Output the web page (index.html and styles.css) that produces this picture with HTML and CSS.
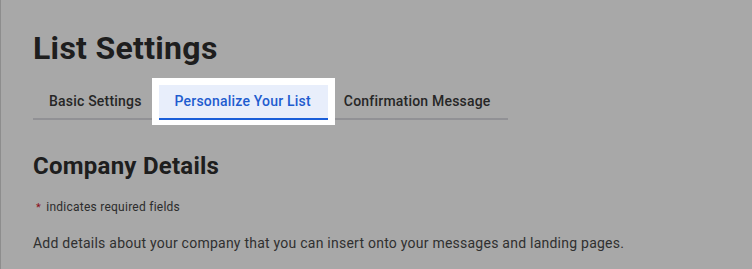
FILE: index.html
```html
<!DOCTYPE html>
<html lang="en">
<head>
<meta charset="utf-8">
<title>List Settings</title>
<link rel="stylesheet" href="styles.css">
</head>
<body>
<div class="page">
  <h1 class="title">List Settings</h1>
  <nav class="tabs">
    <a class="tab">Basic Settings</a>
    <span class="spotlight"><a class="tab tab-active">Personalize Your List</a></span>
    <a class="tab">Confirmation Message</a>
  </nav>
  <h2 class="section-title">Company Details</h2>
  <p class="required"><span class="star">*</span> indicates required fields</p>
  <p class="intro">Add details about your company that you can insert onto your messages and landing pages.</p>
</div>
</body>
</html>
```

FILE: styles.css
```css
html, body {
  margin: 0;
  padding: 0;
  background: #ffffff;
  height: 100%;
  overflow: hidden;
}
body {
  font-family: Roboto, "Liberation Sans", Arial, sans-serif;
  color: #333;
}
.page {
  border-left: 1px solid #d6d6d6;
  padding: 28px 0 0 32px;
  height: 100%;
  box-sizing: border-box;
}
.title {
  margin: 0;
  font-size: 32px;
  line-height: 40px;
  font-weight: 700;
  color: #2e2e2e;
  letter-spacing: 0.3px;
}
.tabs {
  display: flex;
  width: 475px;
  margin-top: 17px;
  border-bottom: 2px solid #dcdde3;
}
.tab {
  display: block;
  padding: 6px 16px 7px;
  margin-bottom: -2px;
  font-size: 14px;
  line-height: 20px;
  font-weight: 500;
  color: #3b3b3b;
  border-bottom: 2px solid transparent;
  white-space: nowrap;
  letter-spacing: 0.2px;
}
.tab:first-child {
  padding-left: 16px;
  padding-right: 17px;
}
.spotlight {
  display: block;
  position: relative;
  z-index: 1;
  background: #fff;
  padding: 7px;
  margin: -7px;
  box-shadow: 0 0 0 3000px rgba(0, 0, 0, 0.34);
}
.tab-active {
  background: #e8eefb;
  color: #1f5ccf;
  border-bottom-color: #1a5ed9;
  padding-left: 16px;
  padding-right: 17px;
}
.section-title {
  margin: 30px 0 0;
  font-size: 24px;
  line-height: 32px;
  font-weight: 700;
  color: #2e2e2e;
  letter-spacing: 0.25px;
}
.required {
  margin: 17px 0 0;
  font-size: 12px;
  line-height: 16px;
  color: #444;
  letter-spacing: 0.25px;
}
.star {
  color: #d3142d;
  display: inline-block;
  margin-left: 3px;
  margin-right: 2px;
  font-size: 11px;
}
.intro {
  margin: 17px 0 0;
  font-size: 14px;
  line-height: 20px;
  color: #4a4a4a;
  letter-spacing: 0.24px;
}
```
